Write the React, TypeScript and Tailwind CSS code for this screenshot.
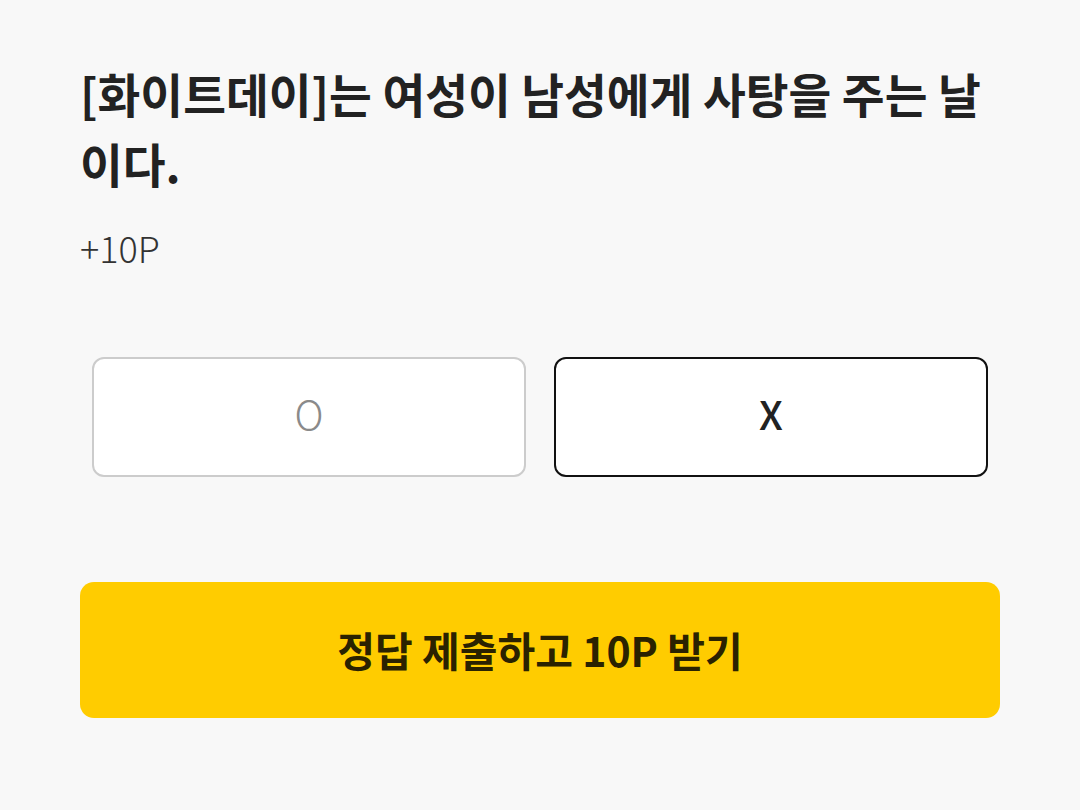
const font = { fontFamily: '"Noto Sans CJK KR", "Noto Sans", sans-serif' };

const App = () => {
  return (
    <div className="min-h-[810px] w-full bg-[#f8f8f8]" style={font}>
      <div className="px-[80px] pt-[58px]">
        {/* Question */}
        <h1 className="text-[46.5px] font-bold leading-[70px] text-[#222222]">
          [화이트데이]는 여성이 남성에게 사탕을 주는 날이다.
        </h1>
        <p className="mt-[25px] text-[36px] font-light leading-[48px] text-[#333333]">+10P</p>

        {/* Choices */}
        <div className="mx-[12px] mt-[86px] flex gap-[28px]">
          <button className="flex h-[120px] flex-1 items-center justify-center rounded-[12px] border-2 border-[#cccccc] bg-white pb-[8px] text-[40px] font-light text-[#8a8a8a]">
            O
          </button>
          <button className="flex h-[120px] flex-1 items-center justify-center rounded-[12px] border-2 border-[#111111] bg-white pb-[8px] text-[40px] font-medium text-[#222222]">
            X
          </button>
        </div>

        {/* Submit */}
        <button className="mt-[105px] flex h-[136px] w-full items-center justify-center rounded-[14px] bg-[#ffcc00] text-[41px] font-bold text-[#2a2200]">
          정답 제출하고 10P 받기
        </button>
      </div>
    </div>
  );
};

export default App;
